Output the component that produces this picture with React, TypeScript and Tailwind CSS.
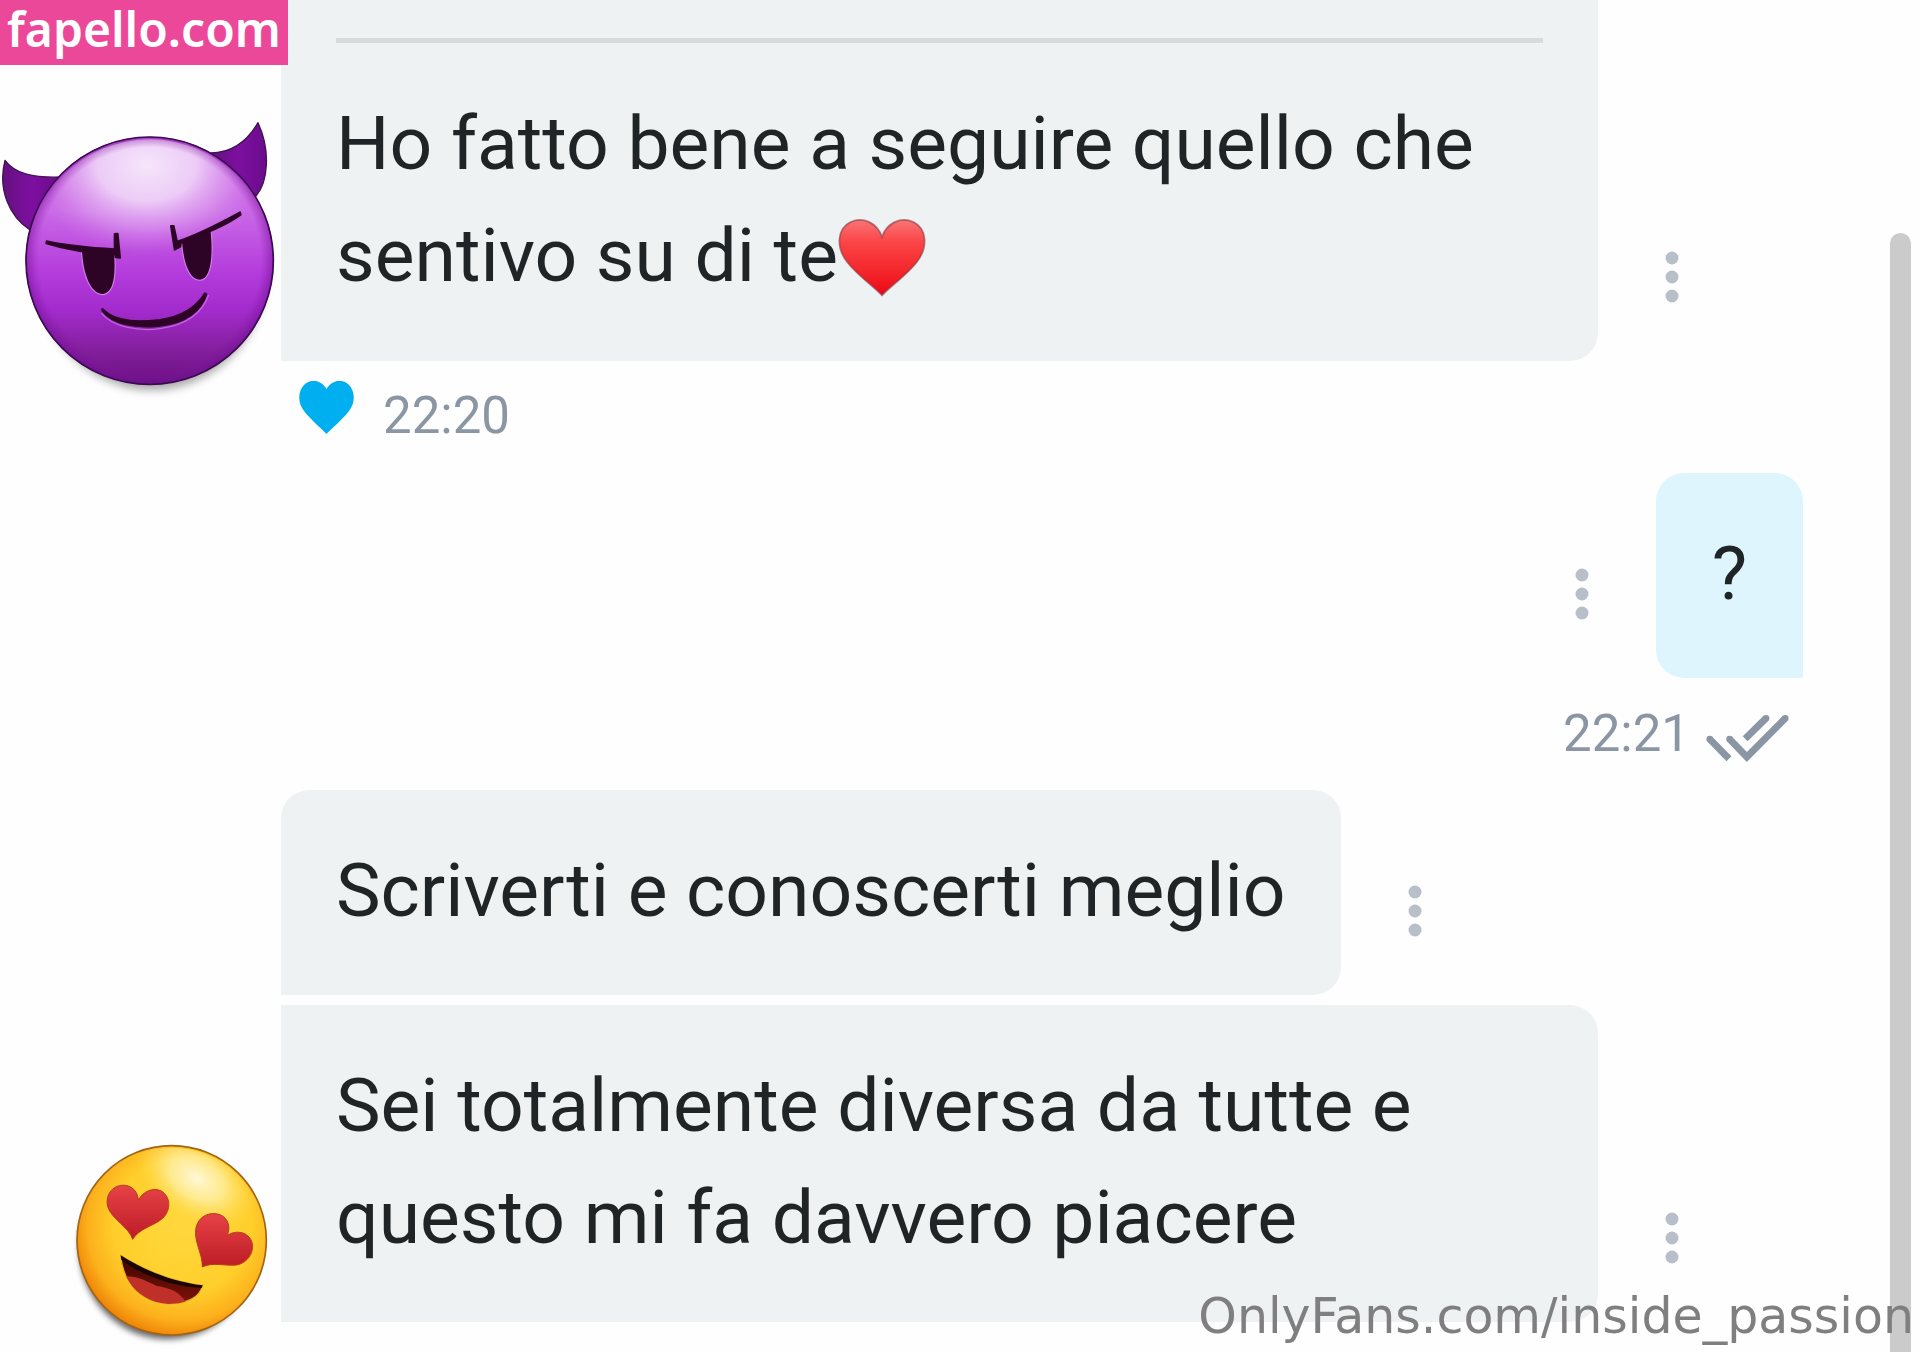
import type { ReactNode } from 'react';

function MoreButton() {
  return (
    <button type="button" aria-label="Altro" className="mx-[52px] mb-[58px] w-11 shrink-0">
      <svg viewBox="0 0 44 52" className="h-[52px] w-11 fill-[#b9bfc8]">
        <circle cx="22" cy="7" r="6.5" />
        <circle cx="22" cy="26" r="6.5" />
        <circle cx="22" cy="45" r="6.5" />
      </svg>
    </button>
  );
}

function Bubble({ className, children }: { className: string; children: ReactNode }) {
  return (
    <div
      className={`max-w-[1317px] px-[55px] pt-11 pb-[49px] text-[75px] leading-[112px] text-[#1f2426] ${className}`}
    >
      {children}
    </div>
  );
}

function RedHeart() {
  return (
    <svg
      viewBox="0 0 264 234"
      role="img"
      aria-label="cuore"
      className="inline-block h-[78px] w-[88px] -mb-[2px] align-[-14px]"
    >
      <defs>
        <linearGradient id="redHeart" x1="0" y1="0" x2="0" y2="1">
          <stop offset="0" stopColor="#f97474" />
          <stop offset="0.3" stopColor="#fb4446" />
          <stop offset="0.75" stopColor="#f22026" />
          <stop offset="1" stopColor="#ea0712" />
        </linearGradient>
      </defs>
      <path
        d="M132 229C104 199 58 169 28 130C-8 84 -2 28 38 9C76 -8 118 12 132 54C146 12 188 -8 226 9C266 28 272 84 236 130C206 169 160 199 132 229Z"
        fill="url(#redHeart)"
        stroke="#8f3a44"
        strokeOpacity="0.65"
        strokeWidth="5"
      />
    </svg>
  );
}

function BlueHeart() {
  return (
    <svg viewBox="0 0 55 53" className="h-[53px] w-[55px] fill-[#00aff0]">
      <path d="M27.500 53C24 49 12 39 5 30C-2 21-1 9 6 3C13-3 23 0 27.500 8C32-0 42-3 49 3C56 9 57 21 50 30C43 39 31 49 27.500 53Z" />
    </svg>
  );
}

function DoubleCheck() {
  return (
    <svg
      viewBox="0 0 248 142"
      className="h-[47px] w-[83px] fill-none stroke-[#8a96a3]"
      strokeWidth="21"
    >
      <path d="M10 73L68 132M70 73L122 127L238 10" />
      <path d="M180 10L117 72" />
      <g className="fill-[#8a96a3] stroke-none">
        <circle cx="10" cy="73" r="10" />
        <circle cx="70" cy="73" r="10" />
        <circle cx="238" cy="10" r="10" />
        <circle cx="180" cy="10" r="10" />
      </g>
    </svg>
  );
}

function DevilEmoji() {
  return (
    <svg viewBox="0 0 843 900" role="img" aria-label="diavoletto" className="h-[300px] w-[281px]">
      <defs>
        <linearGradient id="devilSkin" x1="0" y1="0" x2="0" y2="1">
          <stop offset="0" stopColor="#c65fe0" />
          <stop offset="0.3" stopColor="#c968e6" />
          <stop offset="0.55" stopColor="#b43cdc" />
          <stop offset="0.7" stopColor="#a32bcd" />
          <stop offset="0.85" stopColor="#85209f" />
          <stop offset="1" stopColor="#68107f" />
        </linearGradient>
        <radialGradient
          id="devilShine"
          gradientUnits="userSpaceOnUse"
          cx="0"
          cy="0"
          r="1"
          gradientTransform="translate(440 195) scale(370 270)"
        >
          <stop offset="0" stopColor="#f5e6fb" />
          <stop offset="0.4" stopColor="#f0d5f8" stopOpacity="0.92" />
          <stop offset="0.7" stopColor="#dfa2f0" stopOpacity="0.6" />
          <stop offset="1" stopColor="#cf70e8" stopOpacity="0" />
        </radialGradient>
        <radialGradient id="devilEdge" cx="0.5" cy="0.49" r="0.52">
          <stop offset="0.86" stopColor="#8a18a9" stopOpacity="0" />
          <stop offset="1" stopColor="#6a0f8c" stopOpacity="0.8" />
        </radialGradient>
        <linearGradient id="devilHorn" x1="0" y1="0" x2="1" y2="0">
          <stop offset="0" stopColor="#651080" />
          <stop offset="0.5" stopColor="#7d0fa0" />
          <stop offset="1" stopColor="#6a0c8b" />
        </linearGradient>
        <filter id="devilShadow" x="-20%" y="-20%" width="140%" height="140%">
          <feGaussianBlur stdDeviation="14" />
        </filter>
      </defs>
      <ellipse cx="456" cy="520" rx="340" ry="350" fill="#000" opacity="0.35" filter="url(#devilShadow)" />
      <g fill="url(#devilHorn)" stroke="#3f1450" strokeWidth="4" strokeLinejoin="round">
        <path d="M15 181C45 222 100 234 185 231L88 388C30 350-8 270 15 181Z" />
        <path d="M774 68C745 118 700 158 632 159L768 288C805 245 812 150 774 68Z" />
      </g>
      <circle cx="449" cy="482" r="372" fill="url(#devilSkin)" />
      <circle cx="449" cy="482" r="364" fill="url(#devilShine)" />
      <circle cx="449" cy="482" r="372" fill="url(#devilEdge)" />
      <circle cx="449" cy="482" r="371" fill="none" stroke="#3b0a50" strokeWidth="5" />
      <g fill="#2d0326" stroke="#d67cf0" strokeWidth="7" strokeLinejoin="round" paintOrder="stroke">
        <path d="M246 452C250 535 278 585 310 582C338 578 348 535 342 460Z" />
        <path d="M546 420C550 492 570 540 600 539C630 537 640 480 632 395Z" />
      </g>
      <g fill="#2d0326" stroke="#2d0326" strokeWidth="6" strokeLinejoin="round">
        <path d="M140 424C200 437 270 444 344 448L344 402L353 401L360 473L347 472L345 463C270 460 195 448 139 430Z" />
        <path d="M513 378L521 378L531 425C600 402 660 370 720 337L722 344C672 380 610 402 543 428L541 440L524 449Z" />
        <path d="M307 627C350 672 430 665 480 660C550 650 590 620 615 580L619 583C604 630 560 670 480 677C400 686 335 670 307 632Z" />
      </g>
      <path
        d="M304 640C340 682 420 696 484 685C560 674 606 640 626 585"
        fill="none"
        stroke="#d67cf0"
        strokeOpacity="0.7"
        strokeWidth="4"
      />
    </svg>
  );
}

function LoveEmoji() {
  return (
    <svg viewBox="0 0 660 666" role="img" aria-label="occhi a cuore" className="h-[222px] w-[220px]">
      <defs>
        <radialGradient id="loveSkin" cx="0.56" cy="0.42" r="0.6">
          <stop offset="0" stopColor="#ffd83e" />
          <stop offset="0.6" stopColor="#ffcf2b" />
          <stop offset="0.84" stopColor="#fcb01c" />
          <stop offset="1" stopColor="#ee8206" />
        </radialGradient>
        <radialGradient
          id="loveShine"
          gradientUnits="userSpaceOnUse"
          cx="0"
          cy="0"
          r="1"
          gradientTransform="translate(410 145) rotate(32) scale(200 125)"
        >
          <stop offset="0" stopColor="#fff8d8" />
          <stop offset="0.45" stopColor="#fff2ac" stopOpacity="0.75" />
          <stop offset="1" stopColor="#ffdc50" stopOpacity="0" />
        </radialGradient>
        <linearGradient id="loveHeart" x1="0" y1="0" x2="0" y2="1">
          <stop offset="0" stopColor="#e64246" />
          <stop offset="1" stopColor="#bd1c26" />
        </linearGradient>
        <linearGradient id="loveMouth" x1="0" y1="0" x2="0" y2="1">
          <stop offset="0" stopColor="#3a0600" />
          <stop offset="1" stopColor="#7d1208" />
        </linearGradient>
        <clipPath id="loveMouthClip">
          <path d="M182 376C250 420 340 456 428 466C420 500 385 522 325 522C240 516 188 455 182 376Z" />
        </clipPath>
        <filter id="loveShadow" x="-20%" y="-20%" width="140%" height="140%">
          <feGaussianBlur stdDeviation="10" />
        </filter>
      </defs>
      <ellipse cx="322" cy="356" rx="264" ry="272" fill="#000" opacity="0.6" filter="url(#loveShadow)" />
      <circle cx="335" cy="331" r="284" fill="url(#loveSkin)" stroke="#a16414" strokeWidth="5" />
      <circle cx="335" cy="331" r="278" fill="url(#loveShine)" />
      <g fill="url(#loveHeart)" stroke="#b63d1b" strokeWidth="3">
        <path d="M218 328C208 292 155 268 143 230C134 190 163 162 196 166C220 170 234 188 235 211C248 184 280 171 304 183C332 200 334 240 308 265C282 288 238 295 218 328Z" />
        <path d="M427 411C428 370 400 333 408 293C416 257 450 244 480 254C505 265 512 290 502 316C530 298 565 307 575 334C585 365 564 398 530 405C494 408 455 396 427 411Z" />
      </g>
      <path
        d="M182 376C250 420 340 456 428 466C420 500 385 522 325 522C240 516 188 455 182 376Z"
        fill="url(#loveMouth)"
        stroke="#e8b520"
        strokeWidth="4"
      />
      <g clipPath="url(#loveMouthClip)">
        <path d="M180 440C230 435 255 452 290 468C330 474 360 485 380 520L330 540L200 520Z" fill="#bf3029" />
      </g>
      <path d="M182 376C250 420 340 456 428 466L425 474C340 470 250 438 184 390Z" fill="#1c0400" />
    </svg>
  );
}

function App() {
  return (
    <div className="relative flex min-h-screen overflow-hidden bg-[#fefefe] font-['Roboto',sans-serif]">
      <main className="flex flex-1 flex-col gap-7 pr-[87px]">
        <section className="flex items-start">
          <div className="w-[281px] shrink-0 pt-[100px]">
            <DevilEmoji />
          </div>
          <div className="min-w-0 flex-1">
            <div className="flex items-end">
              <div className="max-w-[1317px] rounded-br-[28px] bg-[#eef2f3] pt-[38px] pb-px">
                <hr className="mx-[55px] h-[5px] border-0 bg-[#d6dbdc]" />
                <Bubble className="">
                  Ho fatto bene a seguire quello che sentivo su di te
                  <RedHeart />
                </Bubble>
              </div>
              <MoreButton />
            </div>
            <div className="mt-7 flex h-14 gap-[29px] pl-[18px] text-[51px] leading-[54px] text-[#8a96a3]">
              <button type="button" aria-label="Mi piace" className="-mt-2 self-start">
                <BlueHeart />
              </button>
              <time>22:20</time>
            </div>
          </div>
        </section>

        <section className="flex flex-col items-end">
          <div className="flex items-end">
            <MoreButton />
            <Bubble className="min-w-[147px] rounded-t-[28px] rounded-bl-[28px] bg-[#def5fe] text-center">
              ?
            </Bubble>
          </div>
          <div className="mt-7 flex h-14 items-end gap-4 pr-[14px] text-[51px] leading-[56px] text-[#8a96a3]">
            <time>22:21</time>
            <DoubleCheck />
          </div>
        </section>

        <section className="flex items-end">
          <div className="-mb-[30px] flex w-[281px] shrink-0 justify-end pr-px">
            <LoveEmoji />
          </div>
          <div className="flex min-w-0 flex-1 flex-col gap-[10px]">
            <div className="flex items-end">
              <Bubble className="rounded-t-[28px] rounded-br-[28px] bg-[#eef2f3]">
                Scriverti e conoscerti meglio
              </Bubble>
              <MoreButton />
            </div>
            <div className="flex items-end">
              <Bubble className="rounded-r-[28px] bg-[#eef2f3]">
                Sei totalmente diversa da tutte e questo mi fa davvero piacere
              </Bubble>
              <MoreButton />
            </div>
          </div>
        </section>
      </main>

      <div className="mt-[233px] mr-[9px] w-[21px] shrink-0 rounded-t-full bg-[#cbcbcb]" />

      <a
        href="#fapello"
        className="absolute top-0 left-0 bg-[#ec4899] px-[7px] pb-2 font-['Noto_Sans',sans-serif] text-[48px] leading-[57px] font-semibold text-white"
      >
        fapello.com
      </a>
      <span className="absolute right-[6px] bottom-0 font-['DejaVu_Sans',sans-serif] text-[49px] leading-[70px] text-[#7f7f7f]">
        OnlyFans.com/inside_passion
      </span>
    </div>
  );
}

export default App;
